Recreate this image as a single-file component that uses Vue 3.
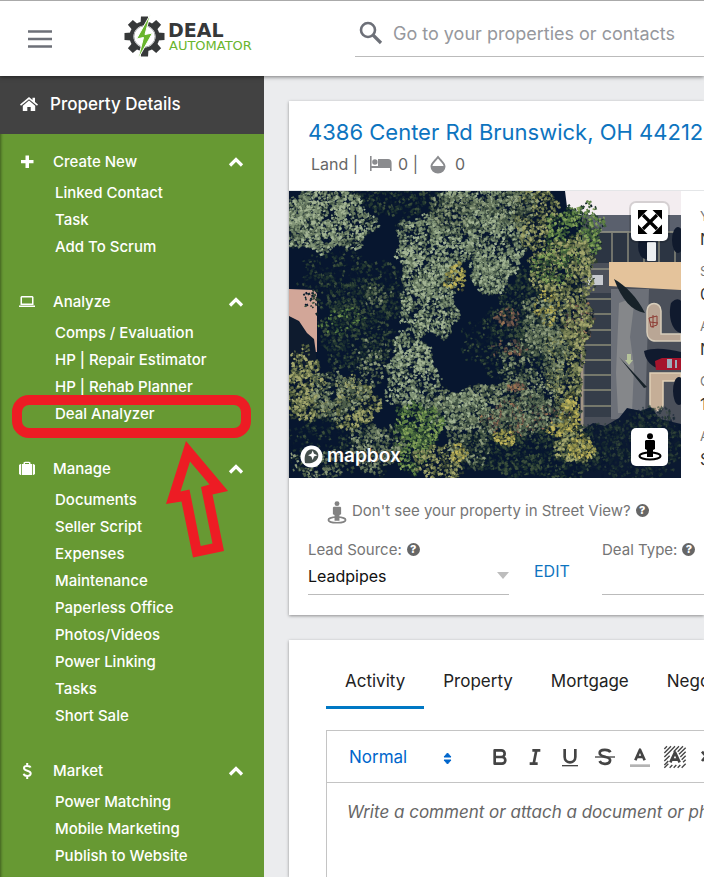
<script setup>
import { ref } from 'vue'

const search = ref('')
const leadSource = ref('Leadpipes')
const dealType = ref('')
const comment = ref('')
const textFormat = ref('Normal')
const activeTab = ref('Activity')

const tabs = ['Activity', 'Property', 'Mortgage', 'Negotiation']

const menu = ref([
  { title: 'Create New', icon: 'plus', open: true, items: ['Linked Contact', 'Task', 'Add To Scrum'] },
  {
    title: 'Analyze',
    icon: 'laptop',
    open: true,
    items: ['Comps / Evaluation', 'HP | Repair Estimator', 'HP | Rehab Planner', 'Deal Analyzer'],
  },
  {
    title: 'Manage',
    icon: 'case',
    open: true,
    items: [
      'Documents',
      'Seller Script',
      'Expenses',
      'Maintenance',
      'Paperless Office',
      'Photos/Videos',
      'Power Linking',
      'Tasks',
      'Short Sale',
    ],
  },
  { title: 'Market', icon: 'dollar', open: true, items: ['Power Matching', 'Mobile Marketing', 'Publish to Website'] },
])

const facts = [
  { label: 'Y', value: 'N' },
  { label: 'S', value: '0' },
  { label: 'A', value: 'N' },
  { label: 'O', value: '1' },
  { label: 'A', value: 'S' },
]

// foliage colours, darkest first
const palettes = {
  light: ['#1c2d30', '#435546', '#66785f', '#829577', '#a3b493'],
  mid: ['#0e1e2a', '#2b3c35', '#4b5c49', '#68785d', '#8d9b7b'],
  olive: ['#0f1d2a', '#2e3c30', '#56623f', '#7b8356', '#a3a66c'],
  green: ['#10212a', '#25402f', '#40603a', '#5f8245', '#86a25a'],
  dark: ['#07162f', '#0b1b2e', '#14272f', '#233831', '#3c4f3c'],
  yellow: ['#3f452f', '#6f7240', '#98954c', '#c2b65c'],
  rust: ['#2a2c30', '#4e4440', '#75594a', '#9a7454'],
}

// [cx, cy, rx, ry, palette, density]
const crowns = [
  [60, 90, 55, 28, 'dark', 0.4],
  [75, 112, 40, 22, 'dark', 0.8],
  [66, 150, 38, 28, 'dark', 0.7],
  [82, 170, 20, 24, 'mid', 0.3],
  [85, 104, 14, 10, 'mid', 0.4],
  [50, 130, 22, 14, 'green', 0.2],
  [106, 8, 40, 16, 'dark', 0.6],
  [215, 152, 40, 38, 'dark', 0.4],
  [240, 120, 28, 48, 'dark', 0.8],
  [40, 250, 50, 28, 'dark', 0.3],
  [240, 255, 70, 34, 'dark', 0.8],
  [150, 215, 20, 18, 'mid', 0.5],
  [38, 26, 42, 36, 'light', 1],
  [12, 28, 22, 22, 'light', 0.8],
  [192, 4, 46, 14, 'light', 1],
  [170, 24, 36, 20, 'mid', 1],
  [140, 62, 36, 36, 'light', 1],
  [205, 54, 30, 42, 'light', 1],
  [200, 84, 20, 18, 'light', 1],
  [244, 25, 22, 34, 'olive', 0.8],
  [222, 16, 24, 18, 'mid', 0.7],
  [286, 42, 28, 30, 'green', 0.9],
  [274, 80, 32, 34, 'olive', 1],
  [262, 74, 20, 20, 'green', 0.4],
  [140, 112, 28, 34, 'light', 1],
  [165, 86, 11, 13, 'yellow', 0.7],
  [121, 180, 25, 40, 'light', 1],
  [14, 190, 18, 32, 'olive', 0.9],
  [20, 216, 22, 14, 'olive', 0.9],
  [64, 212, 22, 26, 'olive', 1],
  [46, 204, 28, 24, 'mid', 0.6],
  [257, 132, 26, 28, 'mid', 0.9],
  [288, 132, 14, 24, 'rust', 0.5],
  [286, 132, 16, 26, 'olive', 0.9],
  [256, 116, 12, 18, 'yellow', 0.4],
  [275, 178, 19, 48, 'olive', 1],
  [246, 172, 34, 34, 'mid', 0.6],
  [202, 214, 54, 22, 'mid', 1],
  [170, 220, 30, 20, 'light', 0.6],
  [216, 126, 14, 9, 'rust', 0.5],
  [218, 156, 16, 9, 'rust', 0.3],
  [226, 195, 9, 5, 'rust', 0.8],
  [198, 230, 10, 7, 'rust', 0.5],
  [236, 225, 40, 18, 'rust', 0.3],
  [240, 222, 42, 20, 'mid', 0.7],
  [128, 234, 24, 24, 'green', 0.9],
  [122, 256, 20, 24, 'green', 0.8],
  [86, 256, 26, 24, 'mid', 0.8],
  [28, 274, 28, 16, 'mid', 0.5],
  [150, 272, 26, 20, 'olive', 0.7],
  [180, 248, 22, 26, 'mid', 0.7],
  [215, 246, 11, 8, 'yellow', 1],
  [280, 222, 10, 20, 'yellow', 0.8],
  [266, 238, 10, 8, 'yellow', 0.7],
  [284, 256, 20, 16, 'olive', 1],
  [290, 256, 13, 11, 'yellow', 0.8],
  [168, 262, 8, 9, 'yellow', 0.8],
]

function createRandom(seed) {
  let state = seed
  return () => {
    state = (state * 1664525 + 1013904223) % 4294967296
    return state / 4294967296
  }
}

function drawCrown([cx, cy, rx, ry, name, density], index) {
  const random = createRandom(index * 7919 + 17)
  const colors = palettes[name]
  const paths = colors.map(() => '')
  const count = Math.round(rx * ry * density)
  const phase = random() * 6

  for (let i = 0; i < count; i += 1) {
    const angle = random() * Math.PI * 2
    const edge = 0.95 + 0.14 * Math.sin(angle * 3 + phase) + 0.1 * Math.sin(angle * 8 + phase)
    const reach = Math.sqrt(random()) * edge + random() * 0.1
    const x = cx + Math.cos(angle) * rx * reach
    const y = cy + Math.sin(angle) * ry * reach
    // clumps of leaves catch the light together
    const clump = Math.sin(x * 0.5 + 2 * Math.sin(y * 0.31)) * Math.sin(y * 0.55 + 2 * Math.sin(x * 0.27))
    const light = Math.min(0.99, Math.max(0, random() * 0.75 + 0.13 + clump * 0.28))
    const tone = Math.floor(light * colors.length)
    const w = (1 + random() * 1.8).toFixed(1)
    const h = (1 + random() * 1.8).toFixed(1)
    paths[tone] += `M${x.toFixed(1)} ${y.toFixed(1)}l${w} -1 l1 ${h} l-${w} 1z`
  }

  return colors.map((color, tone) => ({ color, d: paths[tone], id: `${index}-${tone}` }))
}

const foliage = crowns.flatMap(drawCrown)
const shade = [
  [310, 248, 24, 16],
  [350, 246, 34, 20],
  [376, 250, 20, 18],
  [362, 230, 22, 16],
  [340, 272, 50, 16],
].flatMap(([x, y, rx, ry], i) => drawCrown([x, y, rx, ry, 'dark', 0.6], i + 60))
const stalls = [108, 123, 139, 154, 169, 184, 199, 215]
const gearTeeth = [0, 45, 90, 135, 180, 225, 270, 315]
</script>

<template>
  <div class="app">
    <header class="topbar">
      <button class="menu-btn" type="button" aria-label="Menu">
        <svg width="24" height="18" viewBox="0 0 24 18">
          <path d="M0 1.5h24M0 9h24M0 16.5h24" stroke="#6d7078" stroke-width="2.4" />
        </svg>
      </button>
      <a class="logo" href="#" aria-label="Deal Automator">
        <svg width="140" height="46" viewBox="0 0 140 46">
          <g fill="#363839">
            <path
              v-for="angle in gearTeeth"
              :key="angle"
              d="M16.5 9.5L17 2.5h7l.5 7z"
              :transform="`rotate(${angle} 20.5 22.5)`"
            />
          </g>
          <circle cx="20.5" cy="22.5" r="13" fill="#fff" stroke="#363839" stroke-width="4" />
          <circle cx="20.5" cy="22.5" r="10.6" fill="none" stroke="#a9abac" stroke-width="1" />
          <path d="M26.5 0L12.500 25l7-1.500L14 45l14.500-26-7.500 1.500z" fill="#69b52d" stroke="#fff" />
          <text class="logo-deal" x="44" y="23">DEAL</text>
          <text class="logo-auto" x="45" y="36">AUTOMATOR</text>
        </svg>
      </a>
      <label class="search">
        <svg width="24" height="24" viewBox="0 0 24 24" fill="none" stroke="#6d7078">
          <circle cx="9" cy="9" r="7" stroke-width="2.6" />
          <path d="M14 14l8 8" stroke-width="3.2" />
        </svg>
        <input v-model="search" type="text" placeholder="Go to your properties or contacts" aria-label="Search" />
      </label>
    </header>

    <div class="body">
      <nav class="sidebar">
        <a class="sidebar-title" href="#">
          <svg width="18" height="15" viewBox="0 0 18 15" fill="#fff">
            <path d="M9 0L0 7.600l1 1.200L9 2.200l8 6.600 1-1.200-3-2.500V.8h-2.500v2.100z" />
            <path d="M9 3.600L2.800 8.700V14h4.500v-4h3.400v4h4.500V8.700z" />
          </svg>
          <span>Property Details</span>
        </a>

        <div class="groups">
          <section v-for="group in menu" :key="group.title">
            <button class="group-btn" type="button" :aria-expanded="group.open" @click="group.open = !group.open">
              <svg class="group-icon" width="18" height="16" viewBox="0 0 18 16" fill="#fff">
                <path v-if="group.icon === 'plus'" d="M7.500 1.500H11V6h4.500v3.300H11V14H7.500V9.300H3V6h4.500z" />
                <path
                  v-else-if="group.icon === 'laptop'"
                  fill-rule="evenodd"
                  d="M3.500 2h11l1 1v8h-13V3zM4 3.500v6h10v-6zM1 11.500h16V13H1z"
                />
                <path
                  v-else-if="group.icon === 'case'"
                  fill-rule="evenodd"
                  d="M5.500 3V1.500L7 .8h4l1.500.7V3H14v11H4V3zM7 3h4V2H7zM3.200 3v11H2.500L1 13V4l1.500-1zM14.800 3v11h.7l1.500-1V4l-1.500-1z"
                />
                <path
                  v-else
                  d="M9.200 0v2M9.200 13v3M12.500 4.500C12 2.800 6 2 6 5c0 3.500 6.700 2 6.700 5.500 0 3.500-6.500 3-7 .3"
                  fill="none"
                  stroke="#fff"
                  stroke-width="2"
                />
              </svg>
              <span>{{ group.title }}</span>
              <svg class="chevron" width="16" height="12" viewBox="0 0 16 12">
                <path d="M2 9.500l6-6 6 6" fill="none" stroke="#fff" stroke-width="3.2" />
              </svg>
            </button>
            <ul v-if="group.open">
              <li v-for="item in group.items" :key="item">
                <a href="#">{{ item }}</a>
                <template v-if="item === 'Deal Analyzer'">
                  <span class="marker"></span>
                  <svg class="arrow" width="64" height="120" viewBox="165 440 64 120">
                    <path
                      fill="#ed1c24"
                      fill-rule="evenodd"
                      d="M186 441L228 491L212.500 494.500L224 551L193 557.500L181.500 501.500L166 504ZM190 461.500L180.500 491.500L189.500 489.500L200.700 546L212.500 543.500L201 487L209.500 484.500Z"
                    />
                  </svg>
                </template>
              </li>
            </ul>
          </section>
        </div>
      </nav>

      <main>
        <section class="card">
          <div class="card-head">
            <h1>4386 Center Rd Brunswick, OH 44212</h1>
            <div class="summary">
              <span>Land |</span>
              <svg width="22" height="16" viewBox="0 0 22 16" fill="#8a8b8e">
                <path d="M0 0h1.600v10H8V3h10c2.500 0 3.600 1.500 3.600 4v8H20v-3H1.600v3H0z" />
                <circle cx="4.900" cy="6" r="2.700" />
              </svg>
              <span>0 |</span>
              <svg class="drop" width="16" height="19" viewBox="0 0 16 19">
                <path d="M8 .5C5 4.500 .5 8 .5 11.500a7.500 7 0 0 0 15 0C15.500 8 11 4.500 8 .5z" fill="#8a8b8e" />
                <path d="M8 3.500C6 6.300 2.700 8.800 2.400 11h11.200C13.300 8.800 10 6.300 8 3.500z" fill="#fff" />
              </svg>
              <span>0</span>
            </div>
          </div>

          <div class="overview">
            <div class="map">
              <svg class="aerial" viewBox="0 0 392 287" preserveAspectRatio="xMidYMid slice">
                <rect width="392" height="287" fill="#07162f" />
                <path d="M0 98l25 1 3 4v58H22L0 132z" fill="#d2a698" />
                <path d="M0 125l10 5 8 12 7 6 2 14v12H0z" fill="#0e1b2e" />
                <path d="M293 22h99v218H293z" fill="#4b505a" />
                <path d="M322 98h38l-4 130h-34z" fill="#6c7078" />
                <path d="M330 112l16-6-5 40 4 30-2 46h-14l-2-40z" fill="#85878a" />
                <path d="M276 0h116v24H290l-12-8z" fill="#f3edf0" />
                <path d="M292 24h100v17h-78z" fill="#5a606d" />
                <path d="M300 42h92v30h-92z" fill="#2c3543" />
                <path
                  d="M308 41h84M300 78h20M323 42v29M339 42v29M355 42v29M370 42v29M386 42v29"
                  stroke="#b5b296"
                  fill="none"
                />
                <path d="M320 71h72v28l-72-4z" fill="#e4c39b" />
                <rect x="299" y="84" width="15" height="10" fill="#c7cad0" />
                <rect x="296" y="102" width="26" height="124" fill="#353d49" />
                <path v-for="y in stalls" :key="y" :d="`M293 ${y}h29`" stroke="#b7b48f" />
                <path d="M293 110v128" stroke="#a39585" stroke-width="3" />
                <path d="M325 88c12 7 23 18 31 34-13-2-23-13-31-34zM330 166l28 30-3 1z" fill="#172229" />
                <path
                  d="M358 120c0-10 14-10 14 0v23h20v7h-25c-6 0-9-4-9-9z"
                  fill="#b9a695"
                  stroke="#d7cdbb"
                  stroke-width="1.5"
                />
                <path d="M361 182h31v8h-18v24c0 8-13 8-13-1z" fill="#c5ae97" stroke="#dfd0b7" stroke-width="1.5" />
                <path d="M360 127l8-2v9l-6 2zM361 131l8 1M364 124v13" fill="none" stroke="#8c3a32" />
                <path d="M382 112c5-5 8-4 10-2v32c-10-2-13-18-10-30z" fill="#101a2e" />
                <path d="M355 160c10-4 25-2 37 1v12l-24 4c-8-3-12-10-13-17z" fill="#101a2e" />
                <path d="M366 170l7-3h19v12h-25z" fill="#a5142c" />
                <path d="M378 168h5v9h-5zM386 169h2v8h-2z" fill="#9bacba" />
                <ellipse cx="357" cy="55" rx="8" ry="13" fill="#101a2d" />
                <ellipse cx="389" cy="49" rx="6" ry="13" fill="#101a2d" />
                <ellipse cx="390" cy="200" rx="6" ry="14" fill="#101a2d" />
                <rect x="358" y="51" width="9" height="19" rx="1" fill="#eceef0" />
                <path d="M338 163h4v6h2l-4 5-4-5h2z" fill="#b6c39a" />
                <path d="M292 240l12-8 12 3 14-8 8-10 14 3 10-4 9 12 21 5v60H292z" fill="#0b1931" />
                <path v-for="leaf in shade" :key="leaf.id" :d="leaf.d" :fill="leaf.color" opacity="0.6" />
                <g class="foliage">
                  <path v-for="leaf in foliage" :key="leaf.id" :d="leaf.d" :fill="leaf.color" />
                </g>
              </svg>
              <button class="map-btn expand" type="button" aria-label="Full screen">
                <svg width="24" height="24" viewBox="0 0 24 24">
                  <path d="M5 5l14 14M19 5L5 19" stroke="#000" stroke-width="3.2" />
                  <path d="M0 0h9.500L0 9.500zM24 0v9.500L14.500 0zM0 24v-9.500L9.500 24zM24 24h-9.500l9.500-9.500z" />
                </svg>
              </button>
              <button class="map-btn street" type="button" aria-label="Street view">
                <svg width="24" height="28" viewBox="0 0 24 28">
                  <ellipse cx="12" cy="23" rx="10.500" ry="3.500" fill="none" stroke="#000" stroke-width="2" />
                  <circle cx="12" cy="3.200" r="3" />
                  <path d="M8 7h8l1 1v8l-2 1v7H9v-7l-2-1V8z" />
                </svg>
              </button>
              <a class="mapbox" href="#">
                <svg width="23" height="23" viewBox="0 0 23 23">
                  <circle cx="11.500" cy="11.500" r="11" fill="#fff" />
                  <path d="M5 18c-1-6 0-10 3-12.500 5-3.500 12 1 10 7C16.500 17 11 19 5 18z" fill="#45504d" />
                  <path
                    d="M12.700 5.500l1.300 3.300 3.500 1.400-3.500 1.400-1.300 3.400-1.400-3.400-3.300-1.400 3.300-1.400z"
                    fill="#fff"
                  />
                </svg>
                <span>mapbox</span>
              </a>
            </div>
            <dl class="facts">
              <div v-for="(fact, i) in facts" :key="i">
                <dt>{{ fact.label }}</dt>
                <dd>{{ fact.value }}</dd>
              </div>
            </dl>
          </div>

          <div class="street-note">
            <svg width="20" height="23" viewBox="0 0 24 28" fill="#828282">
              <ellipse cx="12" cy="23" rx="10.500" ry="3.500" fill="none" stroke="#828282" stroke-width="2" />
              <circle cx="12" cy="3.200" r="3" />
              <path d="M8 7h8l1 1v8l-2 1v7H9v-7l-2-1V8z" />
            </svg>
            <span>Don't see your property in Street View?</span>
            <button class="help" type="button" aria-label="Street View help">?</button>
          </div>

          <div class="fields">
            <div class="field">
              <div class="field-label">
                <label for="lead-source">Lead Source:</label>
                <button class="help" type="button" aria-label="Lead source help">?</button>
              </div>
              <div class="select-line">
                <select id="lead-source" v-model="leadSource">
                  <option>Leadpipes</option>
                </select>
                <svg width="12" height="7" viewBox="0 0 12 7"><path d="M0 0h12L6 7z" fill="#bdbdbd" /></svg>
              </div>
            </div>
            <button class="edit-btn" type="button">EDIT</button>
            <div class="field">
              <div class="field-label">
                <label for="deal-type">Deal Type:</label>
                <button class="help" type="button" aria-label="Deal type help">?</button>
              </div>
              <div class="select-line">
                <select id="deal-type" v-model="dealType">
                  <option value=""></option>
                </select>
                <svg width="12" height="7" viewBox="0 0 12 7"><path d="M0 0h12L6 7z" fill="#bdbdbd" /></svg>
              </div>
            </div>
          </div>
        </section>

        <section class="card activity">
          <div class="tabs" role="tablist">
            <button
              v-for="tab in tabs"
              :key="tab"
              type="button"
              role="tab"
              :aria-selected="activeTab === tab"
              :class="{ active: activeTab === tab }"
              @click="activeTab = tab"
            >
              {{ tab }}
            </button>
          </div>

          <div class="editor">
            <div class="toolbar">
              <div class="format">
                <select v-model="textFormat" aria-label="Text format">
                  <option>Normal</option>
                </select>
                <svg width="9" height="13" viewBox="0 0 9 13" fill="#06c">
                  <path d="M1 5l3.500-4L8 5zM1 8l3.500 4L8 8z" stroke="#06c" stroke-linejoin="round" />
                </svg>
              </div>
              <button type="button" aria-label="Bold">
                <svg viewBox="0 0 18 18">
                  <path d="M5 4h5a2.500 2.500 0 0 1 0 5H5zM5 9h5.500a2.500 2.500 0 0 1 0 5H5z" />
                </svg>
              </button>
              <button type="button" aria-label="Italic">
                <svg viewBox="0 0 18 18"><path d="M7 4h6M5 14h6M10 4l-2 10" /></svg>
              </button>
              <button type="button" aria-label="Underline">
                <svg viewBox="0 0 18 18">
                  <path d="M5 3v6a4 4 0 0 0 8 0V3" />
                  <path d="M3 15.500h12" stroke-width="1" />
                </svg>
              </button>
              <button type="button" aria-label="Strike">
                <svg viewBox="0 0 18 18">
                  <path d="M1.500 9h15" stroke-width="1" />
                  <path d="M13 5.500C12 3 5 3 5 6c0 2 2.500 2.500 4.500 3 2.500.6 4 1.500 3 3.700-1 2-6.500 2-7.500-.7" />
                </svg>
              </button>
              <button type="button" aria-label="Text color">
                <svg viewBox="0 0 18 18">
                  <path d="M5.500 11.500L9 3.500l3.500 8M7 9h4" />
                  <path d="M1.500 15.500h15" stroke="#b3b3b3" />
                </svg>
              </button>
              <button type="button" aria-label="Background">
                <svg viewBox="0 0 18 18">
                  <path
                    d="M1 3l2-2M1 6l5-5M1 9l4-4M1 12l4-4M1 15l3-3M1 17l3-3M5 5l4-4M8 5l4-4M11 5l4-4M12 7l5-5M13 9l4-4M14 11l3-3M15 13l2-2M5 17l2-2M8 17l2-2M11 17l2-2M14 17l3-3"
                    stroke-width="1"
                  />
                  <path d="M5.500 13L9 5.500l3.500 7.500M7 11h4" />
                </svg>
              </button>
              <button type="button" aria-label="Subscript">
                <svg viewBox="0 0 18 18"><path d="M3 5l6 7M9 5l-6 7" /></svg>
              </button>
            </div>
            <textarea
              v-model="comment"
              aria-label="Comment"
              placeholder="Write a comment or attach a document or photo"
            ></textarea>
          </div>
        </section>
      </main>
    </div>
  </div>
</template>

<style>
body {
  margin: 0;
}
</style>

<style scoped>
.app {
  min-height: 100vh;
  display: flex;
  flex-direction: column;
  overflow: hidden;
  font-family: Inter, 'Open Sans', sans-serif;
  font-size: 15px;
  color: #333;
  background: #ebecee;
}

* {
  box-sizing: border-box;
}

svg {
  display: block;
  flex: none;
}

button,
input,
select,
textarea {
  font: inherit;
  color: inherit;
  border: 0;
  padding: 0;
  margin: 0;
  background: none;
  outline: 0;
}

button {
  cursor: pointer;
}

a {
  color: inherit;
  text-decoration: none;
}

.topbar {
  position: relative;
  z-index: 1;
  height: 76px;
  flex: none;
  display: flex;
  align-items: center;
  padding-left: 28px;
  background: #fff;
  border-top: 1px solid #aaa;
  box-shadow: 0 1px 4px rgba(0, 0, 0, 0.5);
}

.logo {
  margin-left: 72px;
  padding-bottom: 4px;
}

.logo-deal {
  font: bold 19px 'DejaVu Sans', sans-serif;
  fill: #363839;
}

.logo-auto {
  font: 13px 'DejaVu Sans', sans-serif;
  fill: #69b52d;
}

.search {
  flex: 1;
  height: 46px;
  min-width: 0;
  margin: 0 0 10px 91px;
  display: flex;
  align-items: center;
  gap: 10px;
  padding-left: 4px;
  border-bottom: 1px solid #bbb;
}

.search input {
  flex: 1;
  min-width: 0;
  font-size: 18px;
}

.search input::placeholder {
  color: #96989d;
  opacity: 1;
}

.body {
  flex: 1;
  display: flex;
}

.sidebar {
  flex: 0 0 264px;
  color: #fff;
  font-weight: 500;
  background: #679933;
  box-shadow: inset 3px 0 3px -2px rgba(0, 0, 0, 0.4);
}

.sidebar-title {
  height: 58px;
  display: flex;
  align-items: center;
  gap: 12px;
  padding: 0 0 2px 20px;
  font-size: 17px;
  background: #424242;
}

.groups {
  display: flex;
  flex-direction: column;
  gap: 24px;
  padding: 10px 0 8px;
}

.group-btn {
  width: 100%;
  height: 35px;
  display: flex;
  align-items: center;
  padding: 0 20px 0 18px;
}

.group-icon {
  margin-right: 17px;
}

.chevron {
  margin-left: auto;
}

ul {
  margin: 0;
  padding: 0;
  list-style: none;
}

li {
  position: relative;
  height: 27px;
  line-height: 28px;
  padding-left: 55px;
}

.marker {
  position: absolute;
  top: -5px;
  left: 12px;
  right: 13px;
  height: 43px;
  border: 10px solid #ed1c24;
  border-radius: 17px;
  pointer-events: none;
}

.arrow {
  position: absolute;
  top: 40px;
  left: 165px;
  z-index: 1;
  pointer-events: none;
}

main {
  flex: 1;
  min-width: 0;
  display: flex;
  flex-direction: column;
  gap: 25px;
  padding: 25px 0 0 25px;
}

.card {
  overflow: hidden;
  background: #fff;
  box-shadow: 0 1px 3px rgba(0, 0, 0, 0.4);
}

.card-head {
  height: 90px;
  padding: 16px 0 0 19px;
  border-bottom: 1px solid #e4e6e8;
}

h1 {
  margin: 0;
  font-size: 22px;
  line-height: 30px;
  font-weight: 400;
  white-space: nowrap;
  color: #0d74bf;
}

.summary {
  display: flex;
  align-items: center;
  gap: 6px;
  height: 34px;
  padding-left: 3px;
  font-size: 16px;
  color: #666;
}

.summary svg {
  margin-left: 6px;
}

.summary .drop {
  margin: 0 3px 0 6px;
}

.overview {
  display: flex;
}

.map {
  position: relative;
  flex: 0 0 392px;
  height: 287px;
}

.aerial {
  width: 100%;
  height: 100%;
}

.foliage {
  filter: blur(0.5px);
}

.map-btn {
  position: absolute;
  right: 13px;
  width: 37px;
  height: 38px;
  display: grid;
  place-items: center;
  border-radius: 5px;
  background: #fff;
}

.expand {
  top: 12px;
  box-shadow: 0 0 0 2px rgba(0, 0, 0, 0.12);
}

.street {
  bottom: 12px;
}

.mapbox {
  position: absolute;
  left: 11px;
  bottom: 10px;
  display: flex;
  align-items: center;
  gap: 4px;
  color: #fff;
  font-size: 19px;
  font-weight: 600;
  line-height: 24px;
  text-shadow: 0 0 2px #333;
}

.facts {
  flex: 1;
  margin: 0;
  padding: 14px 0 0 19px;
  overflow: hidden;
}

.facts div {
  height: 55px;
}

.facts dt {
  font-size: 13px;
  line-height: 22px;
  color: #777;
}

.facts dd {
  margin: 0;
  font-size: 16px;
  line-height: 24px;
}

.street-note {
  display: flex;
  align-items: center;
  gap: 5px;
  height: 60px;
  padding: 4px 0 0 38px;
  color: #757575;
}

.street-note span {
  padding-bottom: 4px;
}

.street-note .help {
  margin-bottom: 4px;
}

.help {
  width: 13px;
  height: 13px;
  flex: none;
  border-radius: 50%;
  font-size: 11px;
  font-weight: 800;
  line-height: 13px;
  color: #fff;
  background: #666;
}

.fields {
  display: flex;
  padding: 0 0 20px 19px;
}

.field {
  flex: 0 0 201px;
}

.field-label {
  display: flex;
  align-items: center;
  gap: 5px;
  height: 18px;
  color: #757575;
}

.select-line {
  position: relative;
  border-bottom: 1px solid #bbb;
}

.select-line select {
  appearance: none;
  display: block;
  width: 100%;
  height: 36px;
  font-size: 16px;
  color: #111;
}

.select-line svg {
  position: absolute;
  top: 14px;
  right: 0;
  pointer-events: none;
}

.edit-btn {
  flex: 0 0 93px;
  padding: 6px 0 0 25px;
  font-size: 16px;
  text-align: left;
  color: #0d74bf;
}

.activity {
  flex: 1;
  display: flex;
  flex-direction: column;
  padding: 14px 0 0 37px;
}

.tabs {
  display: flex;
}

.tabs button {
  flex: none;
  height: 55px;
  padding: 2px 19px 0;
  font-size: 17px;
  border-bottom: 3px solid transparent;
  color: #222;
}

.tabs .active {
  border-color: #0078c4;
}

.editor {
  flex: 1;
  display: flex;
  flex-direction: column;
  margin-top: 21px;
  border: 1px solid #c4c4c4;
  border-width: 1px 0 0 1px;
}

.toolbar {
  height: 52px;
  display: flex;
  align-items: center;
  gap: 11px;
  padding-left: 22px;
  border-bottom: 1px solid #c4c4c4;
}

.toolbar button svg {
  width: 24px;
  height: 24px;
  fill: none;
  stroke: #444;
  stroke-width: 2;
  stroke-linejoin: round;
}

.format {
  position: relative;
  flex: 0 0 128px;
}

.format select {
  appearance: none;
  width: 100%;
  font-size: 17px;
  color: #06c;
}

.format svg {
  position: absolute;
  top: 5px;
  right: 25px;
  pointer-events: none;
}

textarea {
  flex: 1;
  min-height: 90px;
  padding: 19px 20px;
  resize: none;
  white-space: pre;
  overflow: hidden;
  font-size: 17px;
}

textarea::placeholder {
  font-style: italic;
  color: #666;
  opacity: 1;
}
</style>
